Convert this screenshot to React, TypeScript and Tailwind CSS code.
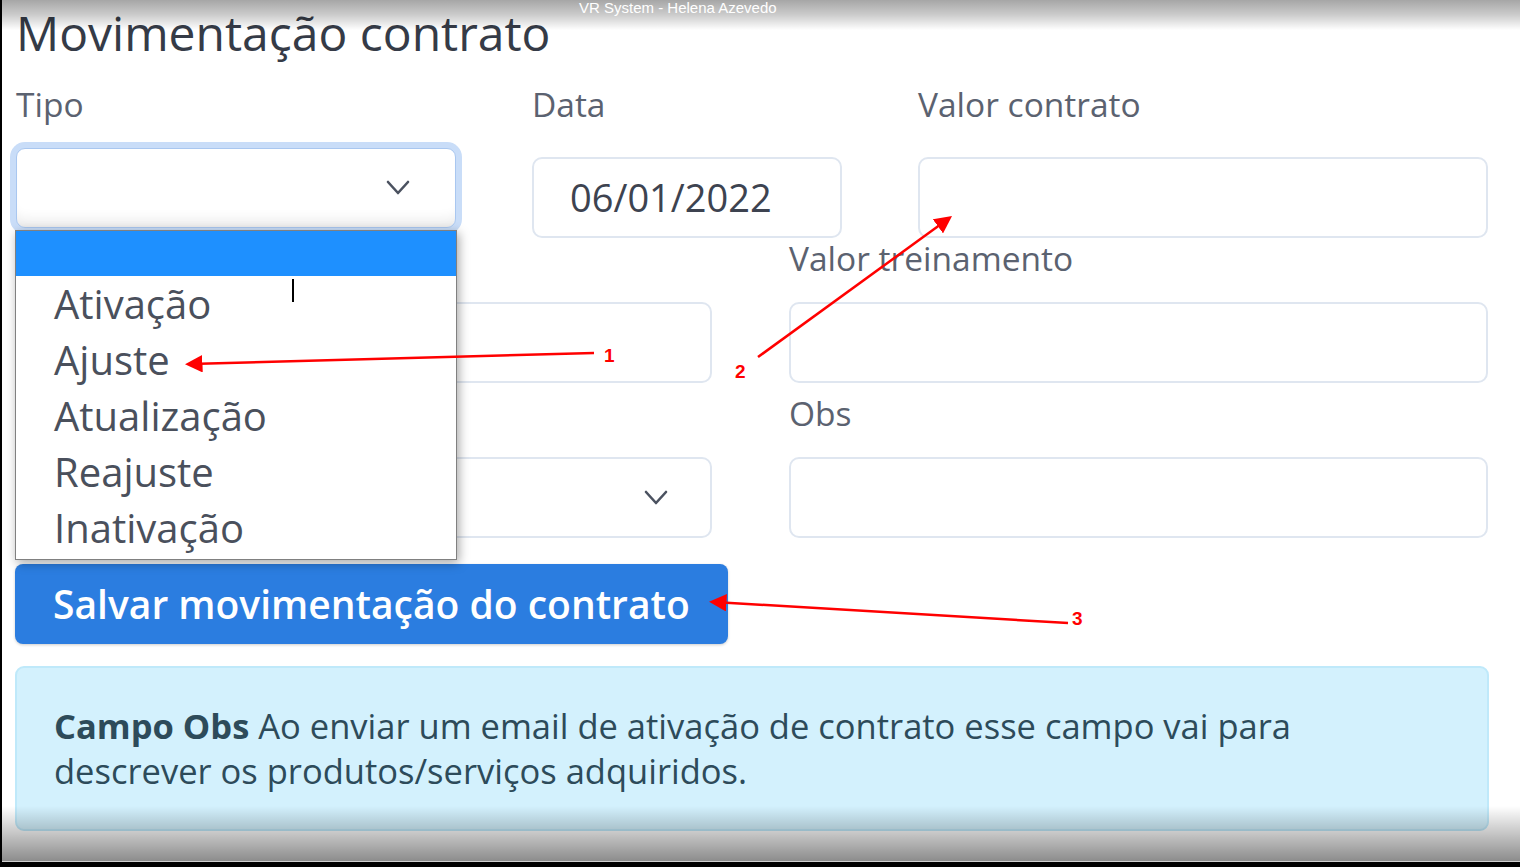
import React from "react";

const label = "block text-[33.5px] leading-[33px] font-medium text-[#5b6270]";
const input = "h-[81px] w-full rounded-[10px] border-2 border-[#dfe6f0] bg-white";

function Chevron() {
  return (
    <svg width="24" height="16" viewBox="0 0 24 16" fill="none">
      <polyline points="2,2 12,13 22,2" stroke="#4b5260" strokeWidth="2.6" strokeLinecap="round" strokeLinejoin="round" />
    </svg>
  );
}

const tipos = ["Ativação", "Ajuste", "Atualização", "Reajuste", "Inativação"];

function Annotations() {
  return (
    <svg className="pointer-events-none absolute inset-0 z-20" width="1520" height="867">
      <defs>
        <marker id="head" markerWidth="7" markerHeight="7" refX="5" refY="3.5" orient="auto">
          <path d="M0,0 L7,3.5 L0,7 z" fill="#ff0000" />
        </marker>
      </defs>
      <g stroke="#ff0000" strokeWidth="2.5" fill="none">
        <line x1="592" y1="353" x2="188" y2="364" markerEnd="url(#head)" />
        <line x1="756" y1="357" x2="946" y2="219" markerEnd="url(#head)" />
        <line x1="1066" y1="623" x2="712" y2="602" markerEnd="url(#head)" />
      </g>
      <g fill="#ff0000" fontFamily="'Liberation Sans', sans-serif" fontWeight="700" fontSize="19">
        <text x="602" y="362">1</text>
        <text x="733" y="378">2</text>
        <text x="1070" y="625">3</text>
      </g>
    </svg>
  );
}

export default function App() {
  return (
    <div className="relative h-[867px] w-[1520px] overflow-hidden border-l-2 border-black bg-white font-['Open_Sans',sans-serif]">
      <div className="pl-[14px] pr-[32px]">
        <h1 className="pt-[9px] text-[48px] leading-none font-medium text-[#353b47]">
          Movimentação contrato
        </h1>

        {/* linha 1 */}
        <div className="mt-[31px] flex gap-[76px]">
          <div className="relative w-[440px]">
            <span className={label}>Tipo</span>
            <div className="mt-[27px] flex h-[80px] items-center justify-end rounded-[9px] border border-[#a9c7f0] bg-white pr-[45px] shadow-[inset_0_-16px_14px_-10px_rgba(0,0,0,0.09)] ring-[6px] ring-[#c9ddf8]">
              <Chevron />
            </div>
            {/* lista aberta do select */}
            <div className="absolute left-[-1px] top-[142px] z-10 h-[330px] w-[442px] border border-[#808080] bg-white shadow-[2px_3px_10px_rgba(0,0,0,0.35)]">
              <div className="h-[45px] bg-[#1e90ff]" />
              {tipos.map((t) => (
                <div key={t} className="flex h-[56px] items-center pl-[38px] text-[40px] leading-none text-[#4a505c]">
                  {t}
                </div>
              ))}
              <div className="absolute left-[276px] top-[48px] h-[23px] w-[2px] bg-black" />
            </div>
          </div>
          <div className="w-[310px]">
            <span className={label}>Data</span>
            <div className={`${input} mt-[36px] flex items-center pl-[36px] text-[38px] text-[#3d4350]`}>06/01/2022</div>
          </div>
          <div className="flex-1">
            <span className={label}>Valor contrato</span>
            <div className={`${input} mt-[36px]`} />
          </div>
        </div>

        {/* linha 2 */}
        <div className="mt-[4px] flex gap-[77px]">
          <div className="w-[696px]">
            <span className={label}>&nbsp;</span>
            <div className={`${input} mt-[27px]`} />
          </div>
          <div className="flex-1">
            <span className={label}>Valor treinamento</span>
            <div className={`${input} mt-[27px]`} />
          </div>
        </div>

        {/* linha 3 */}
        <div className="mt-[14px] flex gap-[77px]">
          <div className="w-[696px]">
            <span className={label}>&nbsp;</span>
            <div className={`${input} mt-[27px] flex h-[80px] items-center justify-end pr-[42px]`}>
              <Chevron />
            </div>
          </div>
          <div className="flex-1">
            <span className={label}>Obs</span>
            <div className={`${input} mt-[27px] h-[80px]`} />
          </div>
        </div>

        <button className="-ml-px mt-[26px] flex h-[80px] w-[713px] items-center rounded-[8px] bg-[#2b7de0] pl-[38px] text-[39px] font-semibold text-white shadow-[0_1px_3px_rgba(0,0,0,0.2)]">
          Salvar movimentação do contrato
        </button>

        <div className="-mx-px mt-[22px] h-[165px] rounded-[9px] border-2 border-[#bfe9fa] bg-[#d3f1fd] pl-[37px] pt-[35px] text-[34.5px] leading-[45px] font-medium text-[#2d4b5a]">
          <span className="font-bold">Campo Obs</span> Ao enviar um email de ativação de contrato esse campo vai para
          <br />
          descrever os produtos/serviços adquiridos.
        </div>
      </div>

      <Annotations />

      {/* moldura da captura */}
      <div className="pointer-events-none absolute inset-x-0 top-0 z-30 h-[30px] bg-linear-to-b from-black/35 via-black/20 to-transparent" />
      <div className="pointer-events-none absolute left-[577px] top-[-3px] z-30 font-['Liberation_Sans',sans-serif] text-[15px] text-white">
        VR System - Helena Azevedo
      </div>
      <div className="pointer-events-none absolute inset-x-0 bottom-0 z-30 flex flex-col">
        <div className="h-[55px] bg-linear-to-b from-transparent to-black/45" />
        <div className="h-px bg-[#cfcfcf]" />
        <div className="h-[5px] bg-black" />
      </div>
    </div>
  );
}
